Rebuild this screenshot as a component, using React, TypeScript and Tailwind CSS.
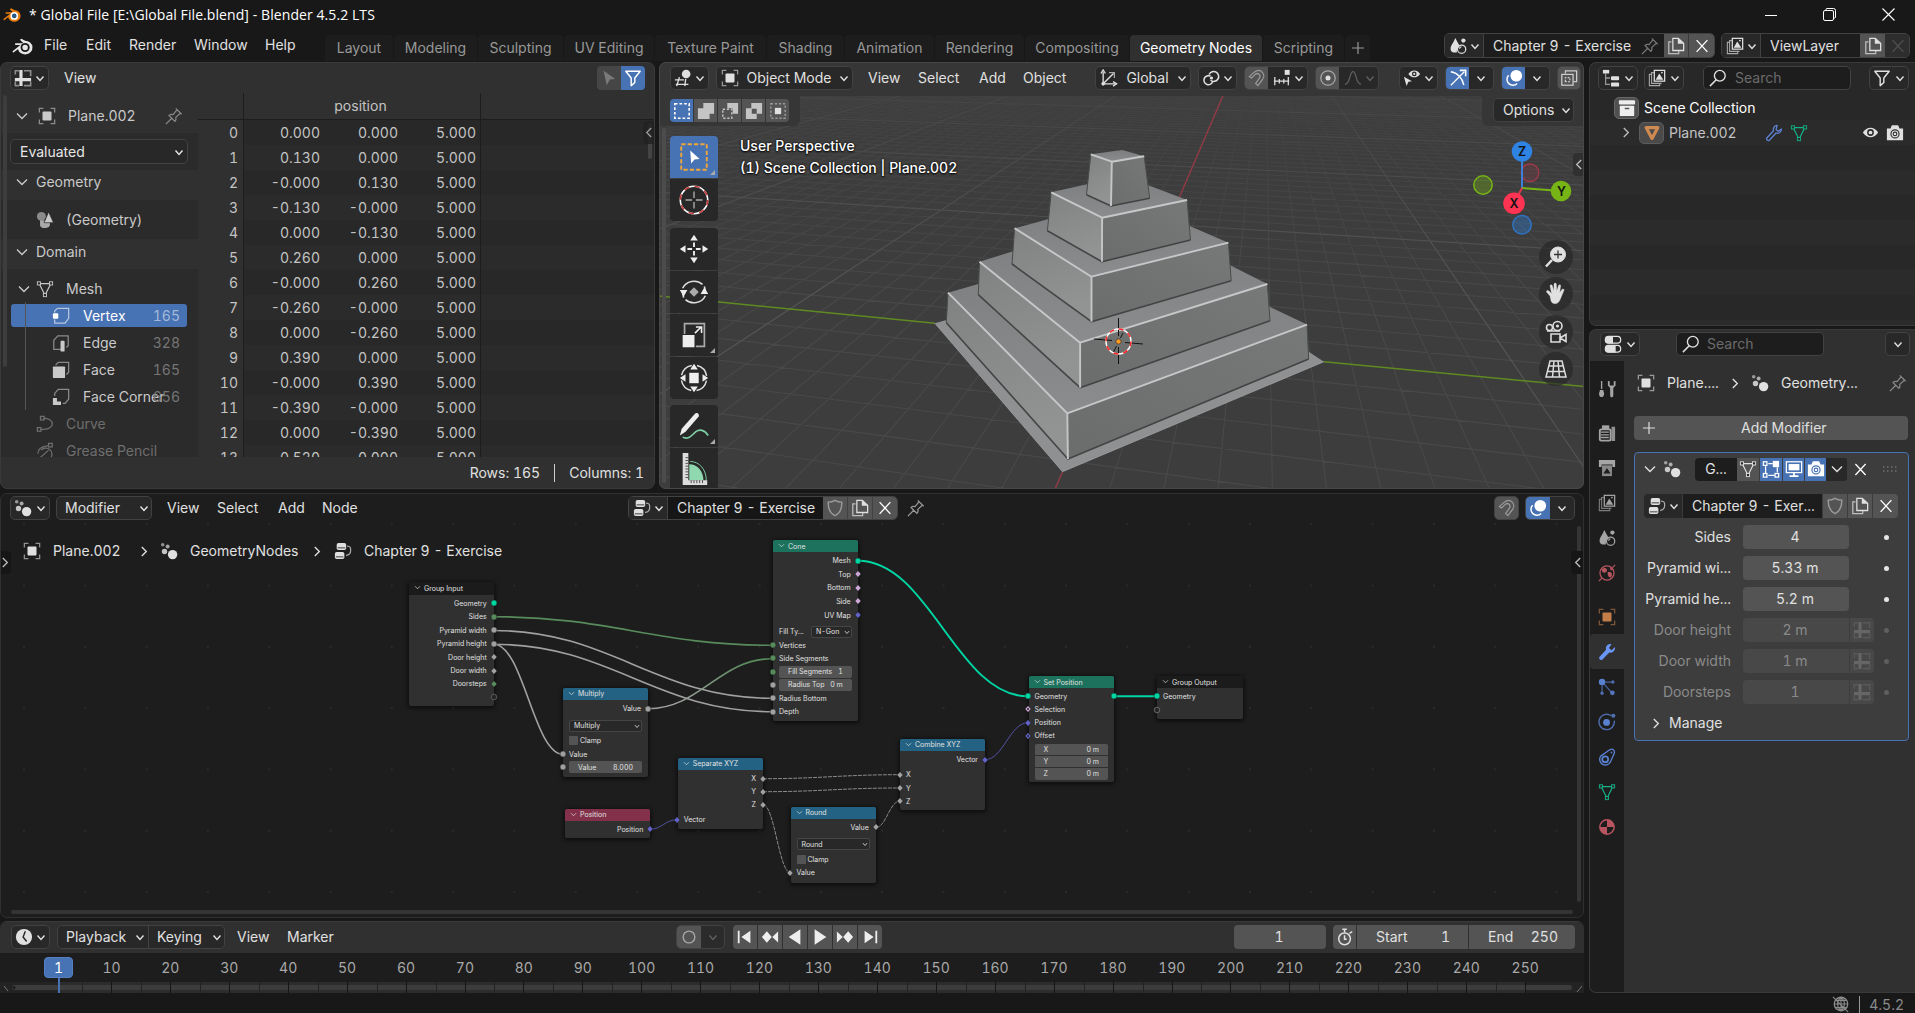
import React from "react";

type P = { children?: React.ReactNode; c?: string };

/* ---------- icon set, all drawn on a 20x20 box ---------- */
const S = { fill: "none", stroke: "currentColor", strokeWidth: 1.4 } as const;
const F = { fill: "currentColor" } as const;

const icons: Record<string, React.ReactNode> = {
  obj: (
    <>
      <path d="M1.5 6V1.5H6M14 1.5h4.5V6M18.5 14v4.5H14M6 18.5H1.5V14" {...S} opacity=".6" />
      <rect x="5" y="5" width="10" height="10" rx="1" {...F} />
    </>
  ),
  pin: <path d="M12 1.500l6.500 6.500M13.500 3l-4.500 5.500c-2-.6-3.500 0-4.500 1l6.500 6.500c1-1 1.600-2.500 1-4.500L17 7M7.500 12.500L1 19" {...S} strokeWidth="1.400" />,
  copy: (
    <>
      <path d="M5 5.500H2v13h11V15.500" {...S} opacity=".75" />
      <path d="M6.500 1.500h6l6 5.500v8h-12z" {...S} />
      <path d="M12 1v6.500h6.500z" {...F} />
    </>
  ),
  x: <path d="M4 3.500l12 13M16 3.500l-12 13" {...S} strokeWidth="1.500" />,
  shield: <path d="M10 1.500c2.500 1.500 4.800 2 7.500 2 .3 7-1.500 12-7.500 15-6-3-7.800-8-7.500-15 2.700 0 5-.5 7.500-2z" {...S} strokeWidth="1.600" />,
  tree: (
    <>
      <rect x="3" y="1" width="10.500" height="8" rx="2" {...F} />
      <rect x="1" y="11" width="10.500" height="8" rx="2" {...F} />
      <path d="M14.500 4.500c4 0 4 2 4 5s-1 5-5 5.500" {...S} opacity=".7" />
      <path d="M4 6.500h8.500M2 16.500h8.500" stroke="#303030" strokeWidth="1" />
    </>
  ),
  dots: (
    <>
      <circle cx="3" cy="3" r="2" {...F} opacity=".6" />
      <circle cx="8.500" cy="5" r="2.200" {...F} opacity=".7" />
      <circle cx="5" cy="10.500" r="3" {...F} opacity=".85" />
      <circle cx="14" cy="14" r="5.200" {...F} />
    </>
  ),
  magnet: (
    <>
      <path d="M1.500 8.500L7 3.500c7-5.500 14 3 8.500 9L11 18.500 8.500 16l4-5.500c2.500-4-1.500-7-4.500-4.500L4 10z" {...S} />
    </>
  ),
  overlay: (
    <>
      <circle cx="12.500" cy="7.500" r="6.500" {...F} />
      <path d="M4 7a6.200 6.200 0 1 0 9.500 9" {...S} strokeWidth="1.600" />
      <path d="M5.500 9.500c0 3 2 5 5 5" stroke="#4772b3" strokeWidth="1.500" fill="none" />
    </>
  ),
  gizmo: (
    <>
      <path d="M2 3c7 1 13 7 14.500 15" {...S} strokeWidth="1.600" />
      <path d="M2 18L17 3" {...S} />
      <path d="M12 1.500h6.500V8" {...S} strokeWidth="1.800" />
    </>
  ),
  sheet: (
    <>
      <path d="M1.500 6V2h4M11 2h7.500v6M1.500 14v4.500h4M11 18.500h7.500V14" {...S} strokeWidth="1.800" opacity=".55" />
      <path d="M6 1h3.500v9H19v3.500H9.500V19H6v-5.500H1V10h5z" {...F} />
    </>
  ),
  filter: <path d="M2 2.500h16l-6 7.500v5l-4 3.500V10z" {...S} strokeWidth="1.600" strokeLinejoin="round" />,
  arrow: <path d="M4 2l13 9-6 .800L7.500 18z" {...F} />,
  mesh: (
    <>
      <path d="M3.500 4h13L10 17zM3.500 4L10 17 16.500 4" {...S} strokeWidth="1.300" />
      <rect x="1.500" y="2" width="3.500" height="3.500" fill="#2b2b2b" stroke="currentColor" />
      <rect x="15" y="2" width="3.500" height="3.500" fill="#2b2b2b" stroke="currentColor" />
      <rect x="8.200" y="15" width="3.500" height="3.500" fill="#2b2b2b" stroke="currentColor" />
    </>
  ),
  geo: (
    <>
      <circle cx="6" cy="6" r="5" {...F} opacity=".6" />
      <path d="M4.500 10.500h11v4.500c0 5-10.500 5-11 1z" {...F} opacity=".8" />
      <path d="M14 1l5.500 12H9z" {...F} stroke="#2b2b2b" strokeWidth=".8" />
    </>
  ),
  vtx: (
    <>
      <path d="M6 1.500h12.500v11l-4 5.500H3v-4M3 6V4.500l3-3" {...S} opacity=".6" />
      <rect x="1" y="7" width="6" height="6" rx="1" {...F} />
    </>
  ),
  edge: (
    <>
      <path d="M10 17H2V7l4.500-5H18v11l-2 2" {...S} opacity=".6" />
      <rect x="9.500" y="7.500" width="4.500" height="12" rx="1" {...F} />
    </>
  ),
  face: (
    <>
      <path d="M4 4.500L7 1.500h11.500v11L16 15" {...S} opacity=".6" />
      <rect x="1" y="6" width="13.500" height="13" rx="1" {...F} />
    </>
  ),
  corner: (
    <>
      <path d="M3 9V6l4-4.500h11.500v11l-4 4.500H12" {...S} opacity=".6" />
      <path d="M1 11h4.500v4H10v4H1z" {...F} />
    </>
  ),
  curve: (
    <>
      <path d="M8 3.500c14 0 13 13 0 12.500H5" {...S} />
      <rect x="5" y="1.500" width="4" height="4" {...S} />
      <rect x="1.500" y="14" width="4" height="4" {...S} />
    </>
  ),
  gp: (
    <>
      <rect x="14" y="1.500" width="4" height="4" {...S} />
      <path d="M14 4c-9 1-12 5-12 9M4 18L14 9M6 9a6 6 0 0 1 10 9" {...S} />
    </>
  ),
  view3d: (
    <>
      <path d="M1 12h10M6 9L3 19M2 17h14M13 11l-1 8" {...S} strokeWidth="1.500" />
      <circle cx="13.500" cy="5.500" r="4.800" {...F} />
    </>
  ),
  orient: (
    <>
      <path d="M3.500 16.500V3M3.500 16.500H17M3.500 16.500L15 5" {...S} strokeWidth="1.500" />
      <path d="M1 5l2.500-4L6 5M14.500 14l4 2.500-4 2.500" {...S} />
      <path d="M10 4h6v6" {...S} opacity=".7" />
      <circle cx="3.500" cy="16.500" r="2" {...F} />
    </>
  ),
  pivot: (
    <>
      <path d="M9.500 8a5 5 0 1 0 2.500 5.500M9.500 12.500A5.500 5.500 0 1 0 8 6" {...S} strokeWidth="1.700" />
      <circle cx="10.500" cy="10" r="1.800" {...F} />
    </>
  ),
  snapinc: (
    <>
      <path d="M1 13.500h17M2 9v9M7 11v5M12 11v5M17 9v9" {...S} />
      <rect x="13" y="1" width="5.500" height="5.500" {...F} />
    </>
  ),
  prop: (
    <>
      <circle cx="10" cy="10" r="8" {...S} opacity=".6" />
      <circle cx="10" cy="10" r="2.800" {...F} />
    </>
  ),
  falloff: <path d="M1 17c6 0 5-14 9-14s3 14 9 14" {...S} />,
  vis: (
    <>
      <path d="M6 5.500c3.500-5 9.500-5 13 0-3.500 5-9.500 5-13 0z" {...F} />
      <circle cx="12.500" cy="5.500" r="2.600" fill="#282828" />
      <circle cx="12.500" cy="5.500" r="1.200" {...F} />
      <path d="M1 8.500l9 5-4 .8L4 19z" {...F} />
    </>
  ),
  xray: (
    <>
      <path d="M6 5V2h12.500v12H15" {...S} />
      <rect x="2" y="6" width="12.500" height="12" {...S} />
      <path d="M6 14V9.500h5V14z" {...S} strokeDasharray="2 1.500" />
    </>
  ),
  scene: (
    <>
      <path d="M7 1c3 6 5 8 4.500 10-3 1-3 4-2.500 6C3 18 1 15 2 11c1-3 3-5 5-10z" {...F} />
      <circle cx="14" cy="13.500" r="4.600" {...S} />
      <circle cx="16" cy="4" r="2.400" {...F} />
      <path d="M11.800 13a2 2 0 0 1 2-2" {...S} />
    </>
  ),
  layer: (
    <>
      <path d="M4 6H1.500v12.500H13V16M6.500 4H4v12h11" {...S} opacity=".7" strokeWidth="1.200" />
      <rect x="7" y="1.500" width="11.500" height="12" {...S} />
      <path d="M8.500 12l4-7 4.500 7z" {...F} />
      <circle cx="15.500" cy="4" r="1" {...F} />
    </>
  ),
  outl: (
    <>
      <rect x="1" y="1" width="7" height="4" {...F} />
      <path d="M4 5v12h5M4 10h5" {...S} opacity=".6" />
      <rect x="10" y="8" width="9" height="4.500" rx="1" {...F} />
      <rect x="10" y="15" width="9" height="4.500" rx="1" {...F} />
    </>
  ),
  search: (
    <>
      <circle cx="12" cy="7.500" r="6" {...S} strokeWidth="1.500" />
      <path d="M8 12l-7 7" {...S} strokeWidth="1.700" />
    </>
  ),
  coll: (
    <>
      <rect x="1" y="1.500" width="18" height="4.500" rx="1" {...F} />
      <rect x="2" y="7.500" width="16" height="11.500" rx="1" {...F} />
      <path d="M7.500 10.500h5" stroke="#555" strokeWidth="1.600" />
    </>
  ),
  tri: <path d="M3.500 4h13L10 16z" fill="none" stroke="currentColor" strokeWidth="3.600" strokeLinejoin="round" />,
  wrench: <path d="M13.500 1.500c-3 0-5 3-4 6L2 15.500c-1 1.500 1 3.800 2.800 2.500l7.500-8c3 1 6-1 6-4.500l-3.500 2.500-2.500-2z" {...S} strokeLinejoin="round" />,
  wrenchF: <path d="M13.500 1c-3.500 0-5.500 3.500-4.500 6.500L1.500 15.500c-1 2 1.200 4.300 3.200 3L12.500 10.500c3.500 1 6.800-1.500 6.500-6l-4 3.500-2.800-2.500L15 1.500z" {...F} />,
  eye: (
    <>
      <path d="M1 10c4.500-7.500 13.500-7.500 18 0-4.500 7.500-13.500 7.500-18 0z" {...F} />
      <circle cx="10" cy="10" r="4" fill="#2b2b2b" />
      <circle cx="10" cy="10" r="2.200" {...F} />
    </>
  ),
  cam: (
    <>
      <path d="M1 5h4l1.500-3.500h7L15 5h4v13H1z" {...F} />
      <circle cx="10" cy="11" r="4.500" fill="none" stroke="#333" strokeWidth="1.300" />
      <circle cx="10" cy="11" r="2" fill="none" stroke="#333" strokeWidth="1.300" />
    </>
  ),
  camB: (
    <>
      <path d="M1 5h4l1.500-3.500h7L15 5h4v13H1z" {...F} />
      <circle cx="10" cy="11" r="4.500" fill="none" stroke="#4772b3" strokeWidth="1.300" />
      <circle cx="10" cy="11" r="2" fill="none" stroke="#4772b3" strokeWidth="1.300" />
    </>
  ),
  props: (
    <>
      <rect x="1.500" y="1.500" width="17" height="7.500" rx="3.500" {...S} />
      <path d="M5 1h5v8.500H5C0 9.500 0 1 5 1z" {...F} />
      <rect x="1.500" y="11.500" width="17" height="7.500" rx="3.500" {...S} />
      <path d="M5 11h8v8.500H5c-5 0-5-8.500 0-8.500z" {...F} />
    </>
  ),
  tool: (
    <>
      <path d="M4 1v9" {...S} strokeWidth="1.500" />
      <path d="M2 11h4v1.500c1.500 2 1 6.500-2 6.500s-3.500-4.500-2-6.500z" {...F} />
      <path d="M11 1v5l2.500 3v8c0 3 3.500 3 3.500 0V9l2.500-3V1l-2 .5v4.500h-4.500V1.500z" {...F} />
    </>
  ),
  render: (
    <>
      <rect x="2" y="6" width="12" height="12.500" rx="1.500" {...S} strokeWidth="2" />
      <path d="M3 9h9M3 12h9M3 15h9" {...S} />
      <rect x="4.500" y="1.500" width="8" height="4" {...F} />
      <path d="M15 3h4v16h-4z" {...F} opacity=".85" />
    </>
  ),
  output: (
    <>
      <path d="M1 1h18v8h-3V6H4v3H1z" {...F} />
      <rect x="4.500" y="7" width="11" height="12" {...F} opacity=".8" />
      <path d="M6 16l4-6 4 6z" fill="#1d1d1d" />
    </>
  ),
  world: (
    <>
      <circle cx="10" cy="10" r="7.800" {...S} />
      <path d="M4 6c4-3 6-1 6 1S7 11 5 9zM11 9c4-1 6 2 3 6-2 1-4-4-3-6zM13 3l4 4-3 0z" {...F} />
      <path d="M1 19l3-3M16 4l3-3" {...S} />
    </>
  ),
  part: (
    <>
      <circle cx="4.500" cy="4.500" r="3.600" {...F} />
      <path d="M4.500 8v8M8 4.500h7M7 7l8 9" {...S} opacity=".7" />
      <circle cx="4.500" cy="17" r="1.900" {...F} opacity=".8" />
      <circle cx="16.500" cy="4.500" r="1.900" {...F} opacity=".8" />
      <circle cx="16" cy="16.500" r="2.600" {...F} opacity=".9" />
    </>
  ),
  phys: (
    <>
      <path d="M14.500 3A8.500 8.500 0 1 0 18 8.500" {...S} strokeWidth="1.600" opacity=".8" />
      <circle cx="9.500" cy="10.500" r="3.800" {...F} />
      <circle cx="17" cy="3" r="2.300" {...F} opacity=".85" />
    </>
  ),
  constr: (
    <>
      <path d="M3 9L13 2c4-2 6 1 5 4l-4 9a6.300 6.300 0 1 1-11-6z" {...S} strokeWidth="1.500" />
      <circle cx="8" cy="12.500" r="3.300" {...S} strokeWidth="2" />
      <circle cx="15" cy="5" r="1" {...F} />
    </>
  ),
  mat: (
    <>
      <circle cx="10" cy="10" r="8" {...S} strokeWidth="1.600" />
      <path d="M10 2v8h8c0-4-3-8-8-8zM10 10v8c-4 0-8-3-8-8z" {...F} />
    </>
  ),
  edit: (
    <>
      <path d="M4 7v8M7 17h7M17 8v6M7 4h5" {...S} />
      <rect x="1.500" y="2" width="4" height="4" {...S} />
      <rect x="1.500" y="15" width="4" height="4" {...S} />
      <rect x="14.500" y="15" width="4" height="4" {...S} />
      <rect x="12" y="1" width="7" height="7" {...F} />
    </>
  ),
  disp: (
    <>
      <rect x="1.500" y="2" width="17" height="12" {...S} />
      <rect x="4" y="4.500" width="12" height="7" {...F} />
      <path d="M5 18h10M10 14v4" {...S} strokeWidth="2" />
    </>
  ),
  clock: (
    <>
      <circle cx="10" cy="10" r="9" {...F} />
      <path d="M11.500 3.500L9 10l4 5" fill="none" stroke="#282828" strokeWidth="1.600" />
    </>
  ),
  stop: (
    <>
      <circle cx="9.500" cy="12" r="6.500" {...S} strokeWidth="1.700" />
      <path d="M7 1.500h5M9.500 2v3M9.500 8v4.500H12M15 6l3-2" {...S} strokeWidth="1.700" />
    </>
  ),
  first: <path d="M2 3h2v14H2zM16 3v14L6 10z" {...F} />,
  last: <path d="M16 3h2v14h-2zM4 3v14l10-7z" {...F} />,
  prevk: <path d="M6.500 3.500L12 10l-5.500 6.500L1 10zM19 4v12l-6.500-6z" {...F} />,
  nextk: <path d="M13.500 3.500L19 10l-5.500 6.500L8 10zM1 4v12l6.500-6z" {...F} />,
  rev: <path d="M16 1.500v17L3 10z" {...F} />,
  play: <path d="M4 1.500v17L17 10z" {...F} />,
  rec: <circle cx="10" cy="10" r="6.500" {...S} strokeWidth="1.600" />,
  blender: (
    <>
      <path d="M12.500 4.500a7 6.500 0 1 1-6.800 8L1 16l-.5-1.500L8 8.500H3V7h8L7.500 3.500l1.500-1z" {...F} />
      <circle cx="12.500" cy="11" r="4.300" fill="var(--hole)" />
      <circle cx="12.500" cy="11" r="2.600" fill="var(--iris)" />
    </>
  ),
  globe: (
    <>
      <circle cx="10" cy="10" r="7.500" {...S} />
      <path d="M10 2.500v15M2.500 10h15M4 6h12M4 14h12M10 2.500c-5 4-5 11 0 15M10 2.500c5 4 5 11 0 15M1 2l17 17" {...S} strokeWidth="1.200" />
    </>
  ),
};

const Ic = ({ n, c = "" }: { n: string; c?: string }) => (
  <svg viewBox="0 0 20 20" className={`h-[18px] w-[18px] shrink-0 ${c}`}>{icons[n]}</svg>
);
const Chev = ({ c = "" }: { c?: string }) => (
  <svg viewBox="0 0 10 10" className={`h-[10px] w-[10px] shrink-0 ${c}`}>
    <path d="M1.500 3.500L5 7.500l3.500-4" fill="none" stroke="currentColor" strokeWidth="1.400" />
  </svg>
);
const Right = ({ c = "" }: { c?: string }) => (
  <svg viewBox="0 0 10 14" className={`h-[13px] w-[9px] shrink-0 ${c}`}>
    <path d="M2 2l5 5-5 5" fill="none" stroke="currentColor" strokeWidth="1.500" />
  </svg>
);
const Down = ({ c = "" }: { c?: string }) => (
  <svg viewBox="0 0 14 10" className={`h-[10px] w-[14px] shrink-0 ${c}`}>
    <path d="M2 2.500l5 5 5-5" fill="none" stroke="currentColor" strokeWidth="1.400" />
  </svg>
);

const Box = ({ children, c = "" }: P) => (
  <div className={`flex h-6 shrink-0 items-center overflow-hidden rounded-[5px] border border-[#424242] bg-[#282828] ${c}`}>{children}</div>
);
const Cell = ({ children, c = "" }: P) => <div className={`flex h-full shrink-0 items-center justify-center ${c}`}>{children}</div>;
const EditorBtn = ({ n, c = "" }: { n: string; c?: string }) => (
  <Box c={`justify-between pl-[3px] pr-[3px] ${c}`}>
    <Ic n={n} />
    <Chev />
  </Box>
);
const T = ({ children, c = "" }: P) => <div className={`shrink-0 whitespace-nowrap ${c}`}>{children}</div>;

/* ---------- top bars ---------- */
const TitleBar = () => (
  <div className="flex h-[31px] items-center pr-[20px] pb-[2px] pl-[3px] text-white">
    <Ic n="blender" c="text-[#e87d0d] [--hole:#fff] [--iris:#265787]" />
    <T c="ml-[8px] font-['Open_Sans',sans-serif] text-[14px] tracking-[0.08px]">* Global File [E:\Global File.blend] - Blender 4.5.2 LTS</T>
    <div className="ml-auto flex items-center gap-[46px]">
      <svg className="h-[12px] w-[12px]" viewBox="0 0 12 12"><path d="M0 6.500h12" stroke="#fff" /></svg>
      <svg className="h-[13px] w-[13px]" viewBox="0 0 13 13"><path d="M3 2.500V1.500Q3 .5 4 .5h6.500q2 0 2 2V9q0 1-1 1H11M.5 4q0-1.500 1.500-1.500h7q1.500 0 1.500 1.500v7q0 1.500-1.500 1.500H2Q.5 12.500.5 11z" fill="none" stroke="#fff" /></svg>
      <svg className="h-[13px] w-[13px]" viewBox="0 0 13 13"><path d="M.5.5l12 12M12.500.5l-12 12" stroke="#fff" strokeWidth="1.100" /></svg>
    </div>
  </div>
);

const tabs: [string, string][] = [
  ["Layout", "w-[69px]"], ["Modeling", "w-[84px]"], ["Sculpting", "w-[86px]"], ["UV Editing", "w-[91px]"],
  ["Texture Paint", "w-[112px]"], ["Shading", "w-[78px]"], ["Animation", "w-[90px]"], ["Rendering", "w-[90px]"],
  ["Compositing", "w-[105px]"], ["Geometry Nodes", "w-[133px]"], ["Scripting", "w-[82px]"],
];
const MenuBar = () => (
  <div className="flex h-[31px]">
    <div className="flex h-[28px] w-[325px] shrink-0 items-center pl-[12px]">
      <Ic n="blender" c="!h-[21px] !w-[21px] translate-y-px text-[#e6e6e6] [--hole:#181818] [--iris:#e6e6e6]" />
      <T c="ml-[11px] w-[42px]">File</T>
      <T c="w-[43px]">Edit</T>
      <T c="w-[65px]">Render</T>
      <T c="w-[71px]">Window</T>
      <T>Help</T>
    </div>
    <div className="flex items-start pt-[4px] text-[#989898]">
      {tabs.map(([t, w]) => (
        <div key={t} className={`${w} h-[26px] shrink-0 pr-px`}>
          <div className={`flex h-full items-center justify-center rounded-t-[4px] whitespace-nowrap ${t === "Geometry Nodes" ? "bg-[#303030] text-white" : "bg-[#1d1d1d]"}`}>{t}</div>
        </div>
      ))}
      <div className="flex h-[26px] w-[25px] items-center justify-center rounded-t-[4px] bg-[#1d1d1d]">
        <svg viewBox="0 0 12 12" className="h-[12px] w-[12px]"><path d="M6 0v12M0 6h12" stroke="#989898" strokeWidth="1.200" /></svg>
      </div>
    </div>
    <div className="mr-[5px] ml-auto flex gap-[6px] pt-[2px]">
      <Box c="!h-[25px] w-[271px] !bg-[#1d1d1d]">
        <Cell c="w-[39px] gap-[3px] border-r border-[#424242] bg-[#282828]"><Ic n="scene" /><Chev /></Cell>
        <Cell c="w-[180px] !justify-between pr-[5px] pl-[9px]"><T>Chapter 9 - Exercise</T><Ic n="pin" c="text-[#777]" /></Cell>
        <Cell c="w-[25px] border-r border-[#3a3a3a] bg-[#545454]"><Ic n="copy" /></Cell>
        <Cell c="w-[26px] bg-[#545454]"><Ic n="x" c="text-white" /></Cell>
      </Box>
      <Box c="!h-[25px] w-[189px] !bg-[#1d1d1d]">
        <Cell c="w-[39px] gap-[3px] border-r border-[#424242] bg-[#282828]"><Ic n="layer" /><Chev /></Cell>
        <Cell c="w-[99px] !justify-start pl-[9px]"><T>ViewLayer</T></Cell>
        <Cell c="w-[25px] bg-[#545454]"><Ic n="copy" /></Cell>
        <Cell c="w-[25px] bg-[#2e2e2e]"><Ic n="x" c="text-[#505050]" /></Cell>
      </Box>
    </div>
  </div>
);

/* ---------- spreadsheet ---------- */
const rows: string[][] = [
  ["0", "0.000", "0.000", "5.000"], ["1", "0.130", "0.000", "5.000"], ["2", "-0.000", "0.130", "5.000"],
  ["3", "-0.130", "-0.000", "5.000"], ["4", "0.000", "-0.130", "5.000"], ["5", "0.260", "0.000", "5.000"],
  ["6", "-0.000", "0.260", "5.000"], ["7", "-0.260", "-0.000", "5.000"], ["8", "0.000", "-0.260", "5.000"],
  ["9", "0.390", "0.000", "5.000"], ["10", "-0.000", "0.390", "5.000"], ["11", "-0.390", "-0.000", "5.000"],
  ["12", "0.000", "-0.390", "5.000"], ["13", "0.520", "0.000", "5.000"],
];
const domains: [string, string, string][] = [["vtx", "Vertex", "165"], ["edge", "Edge", "328"], ["face", "Face", "165"], ["corner", "Face Corner", "656"]];

const Spreadsheet = () => (
  <div className="relative flex w-[655px] shrink-0 flex-col overflow-hidden rounded-[7px] border border-[#3a3a3a] bg-[#303030]">
    <div className="flex h-[30px] shrink-0 items-center pr-[9px] pl-[9px]">
      <EditorBtn n="sheet" c="w-[39px]" />
      <T c="ml-[15px]">View</T>
      <div className="ml-auto flex h-6 overflow-hidden rounded-[4px]">
        <Cell c="w-[24px] bg-[#464646]"><Ic n="arrow" c="text-[#7a7a7a]" /></Cell>
        <Cell c="w-[24px] bg-[#4772b3]"><Ic n="filter" c="text-white" /></Cell>
      </div>
    </div>
    <div className="flex min-h-0 flex-1 overflow-hidden">
      <div className="relative flex w-[197px] shrink-0 flex-col overflow-hidden bg-[#2b2b2b] text-[#c9c9c9]">
        <div className="flex h-[40px] shrink-0 items-center bg-[#303030] pt-[5px] pl-[14px]">
          <Down /><Ic n="obj" c="ml-[9px]" /><T c="ml-[12px] w-[97px]">Plane.002</T><Ic n="pin" c="text-[#888]" />
        </div>
        <div className="flex h-[37px] shrink-0 items-center pl-[9px]">
          <Box c="h-[25px] w-[178px] justify-between pr-[3px] pl-[9px] text-[#e6e6e6]"><T>Evaluated</T><Chev /></Box>
        </div>
        <div className="flex h-[30px] shrink-0 items-center bg-[#303030] pb-[6px] pl-[14px]"><Down /><T c="ml-[7px]">Geometry</T></div>
        <div className="flex h-[39px] shrink-0 items-center pl-[35px]"><Ic n="geo" /><T c="ml-[12px]">(Geometry)</T></div>
        <div className="flex h-[30px] shrink-0 items-center bg-[#303030] pb-[4px] pl-[14px]"><Down /><T c="ml-[7px]">Domain</T></div>
        <div className="flex flex-1 flex-col pt-[9px]">
          <div className="flex h-[23px] shrink-0 items-center pb-px pl-[16px]"><Down /><Ic n="mesh" c="ml-[5px]" /><T c="ml-[12px]">Mesh</T></div>
          <div className="relative mt-[3px] flex shrink-0 flex-col gap-[4px] pr-[11px] pl-[10px]">
            {domains.map(([i, t, n], k) => (
              <div key={t} className={`flex h-[23px] items-center justify-between rounded-[3px] pr-[7px] pl-[41px] ${k === 0 ? "bg-[#4772b3] text-white" : ""}`}>
                <div className="flex w-[100px] shrink-0 items-center gap-[13px]"><Ic n={i} /><T>{t}</T></div>
                <div className={k === 0 ? "-ml-8 text-[#a3b8d9]" : "-ml-8 text-[#757575]"}>{n}</div>
              </div>
            ))}
            <div className="absolute -top-[2px] left-[24px] h-[108px] w-px bg-[#555]" />
          </div>
          <div className="mt-[5px] flex h-[23px] shrink-0 items-center pb-px pl-[35px] text-[#6e6e6e]"><Ic n="curve" /><T c="ml-[12px]">Curve</T></div>
          <div className="mt-[4px] flex h-[23px] shrink-0 items-center pb-px pl-[35px] text-[#6e6e6e]"><Ic n="gp" /><T c="ml-[12px]">Grease Pencil</T></div>
        </div>
        <div className="absolute top-[2px] left-[2px] h-[272px] w-[4px] rounded-full bg-[#3d3d3d]" />
      </div>
      <div className="flex min-w-0 flex-1 flex-col overflow-hidden text-[#c4c4c4]">
        <div className="flex h-[27px] shrink-0 items-center border-b border-[#1d1d1d]">
          <div className="h-full w-[46px] border-r border-[#1d1d1d]" />
          <div className="flex h-full w-[237px] items-center justify-center border-r border-[#1d1d1d] pr-[3px]">position</div>
        </div>
        {rows.map((r, k) => (
          <div key={k} className={`flex h-[25px] shrink-0 items-center text-right ${k % 2 ? "bg-[#2b2b2b]" : "bg-[#282828]"}`}>
            <div className="flex h-full w-[46px] items-center justify-end border-r border-[#1d1d1d] bg-[#303030] pr-[5px]">{r[0]}</div>
            <div className="flex h-full w-[237px] items-center border-r border-[#1d1d1d]">
              <div className="w-[76px]">{r[1]}</div>
              <div className="w-[78px]">{r[2]}</div>
              <div className="w-[78px]">{r[3]}</div>
            </div>
          </div>
        ))}
      </div>
    </div>
    <div className="flex h-[31px] shrink-0 items-center justify-end pr-[10px]">
      <T>Rows: 165</T><div className="mx-[14px] h-[18px] w-px bg-[#ccc]" /><T>Columns: 1</T>
    </div>
    <div className="absolute top-[60px] right-[2px] h-[36px] w-[4px] rounded-full bg-[#444]" />
    <div className="absolute top-[58px] right-0 flex h-[23px] w-[11px] items-center justify-center rounded-l bg-[#202020]/80"><Right c="rotate-180 text-[#999]" /></div>
  </div>
);

/* ---------- 3D viewport ---------- */
// Floor-plane projection: w = 1 + D*s + C*t, with s along X and t along Y.
const D = -0.05165;
const C = -0.0107;
const proj = (s: number, t: number): [number, number] => {
  const w = 1 + D * s + C * t;
  return [(1118.4 - 65.34 * s + 24.39 * t) / w, (341.3 + 0.103 * s - 0.064 * t) / w];
};
const seg = (a: [number, number], b: [number, number]) => `M${a[0].toFixed(1)} ${a[1].toFixed(1)}L${b[0].toFixed(1)} ${b[1].toFixed(1)}`;
let minor = "";
let major = "";
for (let k = -70; k <= 60; k++) {
  const sMax = (0.4 - 1 - C * k) / D;
  const alongX = seg(proj(-90, k), proj(sMax, k));
  const tMax = (0.4 - 1 - D * k) / C;
  const alongY = k < 16 ? seg(proj(k, -90), proj(k, Math.min(tMax, 120))) : "";
  if (k === 0) continue;
  if (k % 10 === 0) major += alongX + alongY;
  else {
    minor += alongX;
    if (k > -50) minor += alongY;
  }
}

type Tier = { l: number[]; f: number[]; r: number[]; bl: number[]; bf: number[]; br: number[]; back: number[] };
const tiers: Tier[] = [
  { l: [948, 292.7], f: [1067.3, 413.3], r: [1307, 324.6], bl: [946.3, 322.7], bf: [1067.9, 459], br: [1308.7, 359], back: [1130, 240] },
  { l: [979.5, 261.7], f: [1080.1, 342.7], r: [1267.4, 284], bl: [978.3, 294.7], bf: [1080.1, 387.7], br: [1270, 320.7], back: [1130, 215] },
  { l: [1014.6, 228.3], f: [1091.5, 276.7], r: [1228.4, 242.7], bl: [1012, 264], bf: [1091.5, 321.7], br: [1231.2, 280.7], back: [1125, 198] },
  { l: [1051.2, 192.3], f: [1102.1, 217.7], r: [1187.1, 200], bl: [1047.4, 230.7], bf: [1102, 261.7], br: [1190.5, 240], back: [1124, 176] },
  { l: [1090.8, 154.3], f: [1111.8, 161.7], r: [1144.2, 156.3], bl: [1086.5, 194.7], bf: [1111, 206], br: [1149.7, 198.3], back: [1122.3, 150] },
];
const pts = (...p: number[][]) => p.map((q) => q.join(",")).join(" ");

const Scene3D = () => (
  <svg viewBox="659 62 925 427" className="absolute inset-0 h-full w-full">
    <defs>
      <linearGradient id="fade" x1="0" y1="62" x2="0" y2="300" gradientUnits="userSpaceOnUse">
        <stop offset="0" stopColor="#fff" stopOpacity=".25" /><stop offset="1" stopColor="#fff" />
      </linearGradient>
      <mask id="m" maskUnits="userSpaceOnUse" x="659" y="62" width="925" height="427"><rect x="659" y="62" width="925" height="427" fill="url(#fade)" /></mask>
      <linearGradient id="lf" x1="0" y1="0" x2=".3" y2="1"><stop offset="0" stopColor="#808282" /><stop offset="1" stopColor="#929494" /></linearGradient>
      <linearGradient id="rf" x1="1" y1="0" x2="0" y2="1"><stop offset="0" stopColor="#777979" /><stop offset="1" stopColor="#6b6d6d" /></linearGradient>
      <linearGradient id="tf" x1="0" y1="0" x2="0" y2="1"><stop offset="0" stopColor="#7c7d7f" /><stop offset="1" stopColor="#8b8c8e" /></linearGradient>
    </defs>
    <rect x="659" y="62" width="925" height="427" fill="#3d3d3d" />
    <g mask="url(#m)" fill="none">
      <path d={minor} stroke="#494949" strokeWidth="1.100" />
      <path d={major} stroke="#555" strokeWidth="1.200" />
    </g>
    <path d="M659 296L935 323.300M1324 361.700L1585 386.700" stroke="#5f8a21" strokeWidth="1.500" />
    <path d="M1237.500 62L1179 198M1062.500 472L1055 489" stroke="#8e3b45" strokeWidth="1.500" />
    <polygon points={pts([934.9, 323.3], [1062.5, 471.7], [1323.9, 361.7], [1300, 346], [1130, 280], [950, 319])} fill="#8f9092" />
    <path d="M934.900 323.300L1062.500 471.700L1323.900 361.700" fill="none" stroke="#a0a1a2" strokeWidth=".8" />
    {tiers.map((t, i) => (
      <g key={i} strokeLinejoin="round">
        <polygon points={pts(t.l, t.f, t.bf, t.bl)} fill="url(#lf)" />
        <polygon points={pts(t.f, t.r, t.br, t.bf)} fill="url(#rf)" />
        <polygon points={pts(t.l, t.f, t.r, t.back)} fill="url(#tf)" />
        <polyline points={pts(t.l, t.bl)} fill="none" stroke="#4a4b4b" strokeWidth="1" />
        <polyline points={pts(t.r, t.br)} fill="none" stroke="#4a4b4b" strokeWidth="1" />
        <polyline points={pts(t.bl, t.bf, t.br)} fill="none" stroke="#3c3d3d" strokeWidth="1.600" strokeOpacity=".9" />
        <polyline points={pts(t.l, t.f, t.r)} fill="none" stroke="#c6c7c8" strokeWidth="1.900" />
        <path d={`M${t.f.join(" ")}L${t.bf.join(" ")}`} stroke="#c4c5c6" strokeWidth="1.900" />
      </g>
    ))}
    <g fill="none" strokeWidth="1">
      <path d="M1118.500 318v18M1118.500 347v17M1094 339l18 1.500M1125 342.500l18 1.500M1123 333l-2.500 5M1116.500 346l-3 6" stroke="#111" />
      <circle cx="1118.500" cy="341.500" r="12.500" stroke="#fff" strokeWidth="1.500" />
      <circle cx="1118.500" cy="341.500" r="12.500" stroke="#f22" strokeWidth="1.500" strokeDasharray="4.900 4.900" />
      <circle cx="1118.500" cy="341.500" r="2.600" fill="#ff9a1f" stroke="#333" strokeWidth=".7" />
    </g>
    {/* navigation gizmo */}
    <g strokeWidth="1.500">
      <circle cx="1530" cy="172.700" r="8.800" fill="#f33a52" fillOpacity=".12" stroke="#9c3a49" />
      <path d="M1522 188V152" stroke="#3d7fd6" strokeWidth="2" />
      <circle cx="1483" cy="185" r="9.200" fill="#76b515" fillOpacity=".35" stroke="#76b515" />
      <circle cx="1522" cy="224.700" r="9.200" fill="#2f83e3" fillOpacity=".35" stroke="#2f73c3" />
      <path d="M1522 188L1561 191" stroke="#76b515" strokeWidth="2" />
      <path d="M1522 188L1514 203" stroke="#e03a50" strokeWidth="2" />
      <circle cx="1522" cy="151.500" r="10.300" fill="#2f83e3" />
      <circle cx="1561" cy="191" r="10.300" fill="#76b515" />
      <circle cx="1514" cy="203.300" r="10.800" fill="#ff3352" />
      <g fontFamily="Inter, sans-serif" fontSize="12.500" fontWeight="600" textAnchor="middle" fill="#111">
        <text x="1522" y="156">Z</text><text x="1561.500" y="195.500">Y</text><text x="1514" y="207.700">X</text>
      </g>
    </g>
    {/* navigation buttons */}
    {[257, 294, 332, 369].map((y) => <circle key={y} cx="1556" cy={y} r="17" fill="#262626" fillOpacity=".65" />)}
    <g fill="#e0e0e0" stroke="#e0e0e0">
      <circle cx="1558" cy="254.500" r="7.500" /><path d="M1552 260l-6 6.500" strokeWidth="2.500" /><path d="M1558 250.500v8M1554 254.500h8" stroke="#333" strokeWidth="1.300" />
      <path d="M1550 296l-3.500-4c-.5-1.800 1.500-2 2.500-1l2.500 2.500-1.500-7.500c0-1.600 2-1.700 2.400-.2l1.400 5 .2-6.500c.2-1.600 2.200-1.600 2.400 0l.4 6.500 1.700-5.300c.6-1.400 2.300-1 2.200.5l-1 6.500 2.200-3c1-1.200 2.600-.4 2 1l-3.700 9c-2 5.500-8 5-9.200 1.500z" strokeWidth=".3" />
    </g>
    <g fill="none" stroke="#dcdcdc" strokeWidth="1.600">
      <circle cx="1549.500" cy="327.500" r="3" /><circle cx="1557.500" cy="326" r="4.500" /><circle cx="1557.500" cy="326" r=".8" /><path d="M1547 331h13M1551 334h9v8h-9zM1560 338l6-3.500v7z" />
      <path d="M1550 361h12l4 16h-20zM1554 361l-1.500 16M1558 361l1.500 16M1549 366h14M1547.500 371.500h17" strokeWidth="1.500" />
    </g>
  </svg>
);

const toolIcons: Record<string, React.ReactNode> = {
  select: (
    <>
      <rect x="4.500" y="4.500" width="27" height="27" fill="none" stroke="#f0a73a" strokeWidth="2" strokeDasharray="4.500 2.250" />
      <path d="M14 11l10 9-5.500.7-3.500 4.300z" fill="#fff" />
    </>
  ),
  cursor: (
    <>
      <circle cx="18" cy="18" r="14.500" fill="none" stroke="#fff" strokeWidth="1.700" />
      <circle cx="18" cy="18" r="14.500" fill="none" stroke="#c33c3c" strokeWidth="1.700" strokeDasharray="5.700 5.700" />
      <path d="M18 9v7M18 20v7M9 18h7M20 18h7" stroke="#aaa" strokeWidth="1.500" />
    </>
  ),
  move: <path d="M18 3l4 6h-8zM18 33l4-6h-8zM3 18l6-4v8zM33 18l-6-4v8zM17 11h2v5h-2zM17 20h2v5h-2zM11 17h5v2h-5zM20 17h5v2h-5z" fill="#eee" />,
  rotate: (
    <>
      <path d="M6 14a13 12 0 0 1 21-4M30 22a13 12 0 0 1-21 4M29 12l1 5M7 24l-1-5" fill="none" stroke="#ddd" strokeWidth="1.700" />
      <path d="M3 16h8l-4 7zM33 20h-8l4-7z" fill="#eee" /><path d="M18 13l5 5-5 5-5-5z" fill="#aaa" />
    </>
  ),
  scale: (
    <>
      <path d="M8 17V6h21v24H20" fill="none" stroke="#aaa" strokeWidth="1.800" /><rect x="6" y="18" width="12.500" height="13" fill="#eee" />
      <path d="M19 16l6-6M20 9.500h6V16" fill="none" stroke="#eee" strokeWidth="1.700" />
    </>
  ),
  transform: (
    <>
      <circle cx="18" cy="18" r="13.500" fill="none" stroke="#ddd" strokeWidth="1.600" strokeDasharray="15.500 5.700" strokeDashoffset="-2.850" />
      <rect x="13" y="12.500" width="10" height="11" fill="#eee" /><path d="M18 3l4 6h-8zM18 33l4-6h-8zM3 18l6-4v8zM33 18l-6-4v8z" fill="#eee" />
    </>
  ),
  annotate: (
    <>
      <path d="M6 30c7 3 10-3 14-6s9-2 13 4" fill="none" stroke="#7ed0a4" strokeWidth="1.800" /><path d="M3 28l2-7L19 5c2-2 5 0 4 3L9 24z" fill="#eee" />
    </>
  ),
  measure: (
    <>
      <path d="M13 30V13c9 0 15 8 15 17z" fill="#8fd8b0" /><path d="M14 10c10 0 17 9 17 20" fill="none" stroke="#7ed0a4" /><path d="M6 1h6v29h20v5H6z" fill="#ddd" />
      <path d="M9 6h3M9 9h3M9 12h3M9 15h3M9 18h3M9 21h3M9 24h3M9 27h3M15 30v3M18 30v3M21 30v3M24 30v3M27 30v3" stroke="#444" />
    </>
  ),
};
const ToolBtn = ({ n, c = "", tri = false }: { n: string; c?: string; tri?: boolean }) => (
  <div className={`relative flex h-[42px] w-[48px] shrink-0 items-center justify-center bg-[#282828] ${c}`}>
    <svg viewBox="0 0 36 36" className="h-[34px] w-[34px]">{toolIcons[n]}</svg>
    {tri && <svg viewBox="0 0 5 5" className="absolute right-[3px] bottom-[3px] h-[5px] w-[5px]"><path d="M5 0v5H0z" fill="#aaa" /></svg>}
  </div>
);

const selModes = [
  <rect key="a" x="2" y="2" width="16" height="16" fill="none" stroke="#fff" strokeWidth="1.800" strokeDasharray="3 2.200" />,
  <path key="b" d="M7 1h12v12h-5v6H1V7h6z" fill="#c4c4c4" />,
  <g key="c"><path d="M7 1h12v12h-6V7H7z" fill="#c4c4c4" /><rect x="2" y="8" width="10" height="10" fill="none" stroke="#c4c4c4" strokeWidth="1.600" strokeDasharray="2.500 2" /></g>,
  <path key="d" fillRule="evenodd" d="M7 1h12v12h-6v6H1V7h6zM7.500 7.500v5.500h5.500V7.500z" fill="#c4c4c4" />,
  <g key="e"><rect x="2" y="2" width="16" height="16" fill="none" stroke="#999" strokeWidth="1.600" strokeDasharray="2.500 2" /><rect x="6.500" y="6.500" width="7" height="7" fill="#e0e0e0" /></g>,
];

const Viewport = () => (
  <div className="relative flex w-[925px] shrink-0 flex-col overflow-hidden rounded-[7px] bg-[#3d3d3d]">
    <Scene3D />
    <div className="relative flex h-[34px] shrink-0 items-center bg-[#363636]/95 pb-[2px] pl-[11px]">
      <EditorBtn n="view3d" c="w-[39px]" />
      <Box c="ml-[7px] w-[137px] justify-between pr-[3px] pl-[4px]"><Ic n="obj" /><T>Object Mode</T><Chev /></Box>
      <T c="ml-[15px] w-[50px]">View</T><T c="w-[61px]">Select</T><T c="w-[44px]">Add</T><T c="w-[72px]">Object</T>
      <Box c="w-[96px] justify-between pr-[3px] pl-[4px]"><Ic n="orient" /><T>Global</T><Chev /></Box>
      <EditorBtn n="pivot" c="ml-[7px] w-[39px]" />
      <Box c="ml-[7px] w-[64px]">
        <Cell c="w-[23px] bg-[#545454]"><Ic n="magnet" c="text-[#999]" /></Cell>
        <Cell c="w-[40px] gap-[3px]"><Ic n="snapinc" /><Chev /></Cell>
      </Box>
      <Box c="ml-[7px] w-[64px]">
        <Cell c="w-[23px] bg-[#545454]"><Ic n="prop" /></Cell>
        <Cell c="w-[40px] gap-[3px] text-[#606060]"><Ic n="falloff" /><Chev /></Cell>
      </Box>
      <EditorBtn n="vis" c="ml-[20px] w-[39px]" />
      <Box c="ml-[7px] w-[49px]">
        <Cell c="w-[23px] bg-[#4772b3] text-white"><Ic n="gizmo" /></Cell><Cell c="w-[24px]"><Chev /></Cell>
      </Box>
      <Box c="ml-[7px] w-[49px]">
        <Cell c="w-[23px] bg-[#4772b3] text-white"><Ic n="overlay" /></Cell><Cell c="w-[24px]"><Chev /></Cell>
      </Box>
      <Box c="ml-[7px] w-[24px] justify-center !bg-[#545454]"><Ic n="xray" c="text-[#ccc]" /></Box>
    </div>
    <div className="relative flex h-[30px] shrink-0 items-start justify-between">
      <div className="h-[30px] rounded-br-[6px] bg-[#363636]/95 pt-[3px] pr-[11px] pl-[11px]">
        <div className="flex h-[23px] w-[119px] gap-px overflow-hidden rounded-[4px]">
          {selModes.map((s, i) => (
            <div key={i} className={`flex flex-1 items-center justify-center ${i === 0 ? "bg-[#4772b3]" : "bg-[#545454]"}`}>
              <svg viewBox="0 0 20 20" className="h-[18px] w-[18px]">{s}</svg>
            </div>
          ))}
        </div>
      </div>
      <div className="h-[30px] rounded-bl-[6px] bg-[#363636]/95 pt-[2px] pr-[10px] pl-[11px]">
        <Box c="w-[81px] justify-between pr-[2px] pl-[9px]"><T>Options</T><Chev /></Box>
      </div>
    </div>
    <div className="relative flex min-h-0 flex-1">
      <div className="flex w-[70px] shrink-0 flex-col overflow-hidden pt-[10px] pl-[11px]">
        <ToolBtn n="select" tri c="rounded-t-[4px] !bg-[#4772b3]" />
        <ToolBtn n="cursor" c="mt-px rounded-b-[4px]" />
        <ToolBtn n="move" c="mt-[7px] rounded-t-[4px]" />
        <ToolBtn n="rotate" c="mt-px" />
        <ToolBtn n="scale" tri c="mt-px" />
        <ToolBtn n="transform" c="mt-px rounded-b-[4px]" />
        <ToolBtn n="annotate" tri c="mt-[6px] rounded-t-[4px]" />
        <ToolBtn n="measure" c="mt-px" />
      </div>
      <div className="pt-[9px] pl-[11px] text-[14px] font-medium text-white [text-shadow:0_0_2px_#000,0_1px_2px_#000]">
        <div className="h-[22px] leading-[22px]">User Perspective</div>
        <div className="h-[22px] leading-[22px]">(1) Scene Collection | Plane.002</div>
      </div>
    </div>
    <div className="absolute top-[66px] left-[3px] h-[355px] w-[4px] rounded-full bg-[#4c4c4c]" />
    <div className="absolute top-[91px] right-0 flex h-[23px] w-[11px] items-center justify-center rounded-l bg-[#303030]"><Right c="rotate-180 text-[#bbb]" /></div>
    <div className="pointer-events-none absolute inset-0 rounded-[7px] border border-[#484848]" />
  </div>
);

/* ---------- node editor ---------- */
const GRN = "#00d6a3", INT = "#598c5c", FLT = "#a1a1a1", BOOL = "#cca6d6", VEC = "#6363c7";
type Sock = { side: "l" | "r"; col: string; shape?: "o" | "d" | "dd" | "e" };
type Row = { k: "t" | "drop" | "check" | "field" | "vec"; label?: string; val?: string; h: number; mt?: number; s?: Sock };
type NodeT = { title: string; x: number; y: number; w: number; hh: number; h: number; pt: number; head: string; rows: Row[] };
const o = (label: string, col: string, h: number, shape: Sock["shape"] = "o"): Row => ({ k: "t", label, h, s: { side: "r", col, shape } });
const inp = (label: string, col: string, h: number, shape: Sock["shape"] = "o", mt = 0): Row => ({ k: "t", label, h, mt, s: { side: "l", col, shape } });

const nodes: NodeT[] = [
  { title: "Group Input", x: 409, y: 582, w: 84.7, hh: 12.5, h: 124, pt: 2.3, head: "bg-[#1b1b1b]", rows: [
    o("Geometry", GRN, 13.4), o("Sides", INT, 13.4), o("Pyramid width", FLT, 13.6), o("Pyramid height", FLT, 13.6),
    o("Door height", FLT, 13.2, "d"), o("Door width", FLT, 13.2, "d"), o("Doorsteps", INT, 13.2, "d"), o("", "#666", 13.4, "e")] },
  { title: "Multiply", x: 563, y: 687.5, w: 85, hh: 12.5, h: 89.5, pt: 2, head: "bg-[#246283]", rows: [
    o("Value", FLT, 13.3), { k: "drop", val: "Multiply", h: 13.3, mt: 3.7 }, { k: "check", label: "Clamp", h: 13.3, mt: 1.8 },
    inp("Value", FLT, 13.3), { k: "field", label: "Value", val: "8.000", h: 13.3, s: { side: "l", col: FLT } }] },
  { title: "Cone", x: 773, y: 540, w: 84.7, hh: 12, h: 181, pt: 1.7, head: "bg-[#1d725e]", rows: [
    o("Mesh", GRN, 13.65), o("Top", BOOL, 13.65, "d"), o("Bottom", BOOL, 13.65, "d"), o("Side", BOOL, 13.65, "d"), o("UV Map", VEC, 13.65, "d"),
    { k: "drop", label: "Fill Ty...", val: "N-Gon", h: 13.3, mt: 3.2 },
    inp("Vertices", INT, 13.3), inp("Side Segments", INT, 13.3),
    { k: "field", label: "Fill Segments", val: "1", h: 13.3, s: { side: "l", col: INT } },
    { k: "field", label: "Radius Top", val: "0 m", h: 13.3, s: { side: "l", col: FLT } },
    inp("Radius Bottom", FLT, 13.3), inp("Depth", FLT, 13.3)] },
  { title: "Set Position", x: 1028.5, y: 676, w: 85.5, hh: 12, h: 106, pt: 1.7, head: "bg-[#1d725e]", rows: [
    { k: "t", label: "Geometry", h: 13.2, s: { side: "l", col: GRN } }, inp("Selection", BOOL, 13.2, "dd"), inp("Position", VEC, 13.2, "d"), inp("Offset", VEC, 13.2, "dd"),
    { k: "vec", h: 36, mt: 1.2 }] },
  { title: "Group Output", x: 1157, y: 676, w: 85.5, hh: 12, h: 42.5, pt: 1.7, head: "bg-[#1b1b1b]", rows: [inp("Geometry", GRN, 13.3), inp("", "#777", 13.3, "e")] },
  { title: "Separate XYZ", x: 677.7, y: 757.7, w: 85.3, hh: 12, h: 71, pt: 2.4, head: "bg-[#246283]", rows: [
    o("X", FLT, 13, "d"), o("Y", FLT, 13, "d"), o("Z", FLT, 13, "d"), inp("Vector", VEC, 13, "d", 2)] },
  { title: "Position", x: 565, y: 808.5, w: 85.3, hh: 12, h: 29.5, pt: 2.4, head: "bg-[#83314a]", rows: [o("Position", VEC, 13, "d")] },
  { title: "Round", x: 790.5, y: 806.7, w: 85.3, hh: 12, h: 76.5, pt: 2.3, head: "bg-[#246283]", rows: [
    o("Value", FLT, 13, "d"), { k: "drop", val: "Round", h: 13.3, mt: 3.4 }, { k: "check", label: "Clamp", h: 13.3, mt: 2.3 }, inp("Value", FLT, 13.3, "d")] },
  { title: "Combine XYZ", x: 900, y: 738.7, w: 85, hh: 12.3, h: 71, pt: 2.2, head: "bg-[#246283]", rows: [
    o("Vector", VEC, 13, "d"), inp("X", FLT, 13.3, "d", 2), inp("Y", FLT, 13.3, "d"), inp("Z", FLT, 13.3, "d")] },
];

const Socket = ({ s }: { s: Sock }) => (
  <svg viewBox="-4 -4 8 8" className={`absolute top-1/2 h-[8px] w-[8px] -translate-y-1/2 ${s.side === "l" ? "-left-[4.500px]" : "-right-[4.200px]"}`}>
    {s.shape === "d" || s.shape === "dd" ? (
      <>
        <path d="M0-3.300L3 0 0 3.300-3 0z" fill={s.col} stroke="#111" strokeWidth=".4" />
        {s.shape === "dd" && <circle r="1" fill="#222" />}
      </>
    ) : s.shape === "e" ? (
      <circle r="2.800" fill="#252525" stroke={s.col} strokeWidth=".8" />
    ) : (
      <circle r="2.900" fill={s.col} stroke="#111" strokeWidth=".4" />
    )}
  </svg>
);

const NodeRow = ({ r }: { r: Row }) => (
  <div className="relative flex shrink-0 items-center px-[6px]" style={{ height: r.h, marginTop: r.mt }}>
    {r.k === "t" && <div className={`w-full ${r.s?.side === "r" ? "pr-[1px] text-right" : ""}`}>{r.label}</div>}
    {r.k === "drop" && (
      <>
        {r.label && <div className="w-[32px] shrink-0">{r.label}</div>}
        <div className="flex h-[12px] flex-1 items-center justify-between rounded-[2px] border border-[#454545] bg-[#282828] pr-px pl-[4px]">{r.val}<Chev c="!h-[6px] !w-[6px]" /></div>
      </>
    )}
    {r.k === "check" && <><div className="mr-[2px] h-[9px] w-[9px] rounded-[1px] bg-[#545454]" />{r.label}</>}
    {r.k === "field" && <div className="flex h-[12px] flex-1 items-center justify-between rounded-[2px] bg-[#545454] px-[9px]"><span>{r.label}</span><span>{r.val}</span></div>}
    {r.k === "vec" && (
      <div className="flex h-full flex-1 flex-col gap-px overflow-hidden rounded-[2px]">
        {["X", "Y", "Z"].map((a) => <div key={a} className="flex flex-1 items-center justify-between bg-[#545454] px-[9px]"><span>{a}</span><span>0 m</span></div>)}
      </div>
    )}
    {r.s && <Socket s={r.s} />}
  </div>
);

// Node and link coordinates share the window's space; the canvas starts at y = 493.
const NodeBox = ({ n }: { n: NodeT }) => (
  <div className="absolute flex flex-col rounded-[2px] bg-[#303030] shadow-[0_1px_4px_1px_rgba(0,0,0,0.6)]" style={{ left: n.x, top: n.y - 493, width: n.w, height: n.h }}>
    <div className={`flex shrink-0 items-center rounded-t-[2px] pl-[5px] ${n.head}`} style={{ height: n.hh }}>
      <Down c="mr-[3px] mb-px !h-[5px] !w-[7px]" />{n.title}
    </div>
    <div className="flex flex-col" style={{ paddingTop: n.pt }}>{n.rows.map((r, i) => <NodeRow key={i} r={r} />)}</div>
    {n.title === "Set Position" && (
      <svg viewBox="-4 -4 8 8" className="absolute top-[16.300px] -right-[4.200px] h-[8px] w-[8px]"><circle r="2.900" fill={GRN} stroke="#111" strokeWidth=".4" /></svg>
    )}
  </div>
);

const link = (x1: number, y1: number, x2: number, y2: number) => {
  const d = (x2 - x1) * 0.42;
  return `M${x1} ${y1}C${x1 + d} ${y1} ${x2 - d} ${y2} ${x2} ${y2}`;
};

const NodeEditor = () => (
  <div className="relative flex h-[425px] shrink-0 flex-col overflow-hidden rounded-[7px] border border-[#303030] bg-[#1d1d1d]">
    <svg viewBox="1 494 1582 423" className="absolute inset-0 h-full w-full">
      <defs>
        <pattern id="dots" x="-6.700" y="493.600" width="61.300" height="61.300" patternUnits="userSpaceOnUse"><circle cx="30.650" cy="30.650" r="1" fill="#2e2e2e" /></pattern>
        <linearGradient id="fi" x1="648" x2="772" y1="0" y2="0" gradientUnits="userSpaceOnUse"><stop offset=".2" stopColor={FLT} /><stop offset=".8" stopColor={INT} /></linearGradient>
      </defs>
      <rect x="0" y="493" width="1584" height="425" fill="url(#dots)" />
      <g fill="none" strokeWidth="1.600" stroke={FLT}>
        <path d={link(494, 616.7, 772, 645.3)} stroke={INT} />
        <path d={link(494, 630.5, 772, 698.3)} />
        <path d={link(494, 644.3, 772, 711.7)} />
        <path d={link(494, 644.3, 563, 754.3)} />
        <path d={link(648, 708.7, 772, 658.7)} stroke="url(#fi)" />
        <path d={link(858, 560.7, 1028, 696.3)} stroke={GRN} strokeWidth="2" />
        <path d="M1114 696.300H1157" stroke={GRN} strokeWidth="2" />
        <g strokeWidth="1">
          <path d={link(650, 829.3, 677, 819.7)} stroke="#5353a5" />
          <path d={link(985, 759.7, 1028, 722.7)} stroke="#5353a5" />
          <path d={link(763, 778.7, 899, 774.7)} stroke="#8a8a8a" strokeDasharray="4 1" />
          <path d={link(763, 791.7, 899, 788)} stroke="#8a8a8a" strokeDasharray="4 1" />
          <path d={link(763, 804.7, 790.5, 872.7)} stroke="#8a8a8a" strokeDasharray="4 1" />
          <path d={link(876, 827.5, 899.5, 801.3)} stroke="#8a8a8a" strokeDasharray="4 1" />
        </g>
      </g>
    </svg>
    <div className="absolute -inset-px text-[7px] leading-none whitespace-nowrap">{nodes.map((n) => <NodeBox key={n.title} n={n} />)}</div>
    <div className="relative flex h-[31px] shrink-0 items-center pb-[3px] pl-[9px]">
      <EditorBtn n="dots" c="w-[40px]" />
      <Box c="ml-[6px] w-[96px] justify-between pr-[2px] pl-[8px]"><T>Modifier</T><Chev /></Box>
      <T c="ml-[15px] w-[50px]">View</T><T c="w-[61px]">Select</T><T c="w-[44px]">Add</T><T c="w-[306px]">Node</T>
      <Box c="w-[270px] !bg-[#161616]">
        <Cell c="w-[39px] gap-[3px] border-r border-[#424242] bg-[#282828]"><Ic n="tree" /><Chev /></Cell>
        <Cell c="w-[155px] !justify-start pl-[9px]"><T>Chapter 9 - Exercise</T></Cell>
        <Cell c="w-[25px] border-r border-[#424242] bg-[#545454]"><Ic n="shield" c="text-[#9a9a9a]" /></Cell>
        <Cell c="w-[25px] border-r border-[#424242] bg-[#545454]"><Ic n="copy" /></Cell>
        <Cell c="w-[24px] bg-[#545454]"><Ic n="x" c="text-white" /></Cell>
      </Box>
      <Ic n="pin" c="ml-[9px] text-[#999]" />
      <Box c="mr-[6px] ml-auto w-[25px] justify-center !bg-[#545454]"><Ic n="magnet" c="text-[#999]" /></Box>
      <Box c="mr-[8px] w-[50px]">
        <Cell c="w-[24px] bg-[#4772b3] text-white"><Ic n="overlay" /></Cell><Cell c="w-[24px]"><Chev /></Cell>
      </Box>
    </div>
    <div className="relative mt-[14px] flex h-[24px] shrink-0 items-center pl-[22px]">
      <Ic n="obj" /><T c="ml-[12px] w-[87px]">Plane.002</T><Right /><Ic n="dots" c="ml-[11px]" />
      <T c="ml-[12px] w-[123px]">GeometryNodes</T><Right /><Ic n="tree" c="ml-[12px]" /><T c="ml-[12px]">Chapter 9 - Exercise</T>
    </div>
    <div className="absolute top-[32px] right-[2px] h-[376px] w-[4px] rounded-full bg-[#353535]" />
    <div className="absolute bottom-[3px] left-[10px] h-[4px] w-[1562px] rounded-full bg-[#353535]" />
    <div className="absolute top-[57px] -left-px flex h-[23px] w-[11px] items-center justify-center rounded-r bg-[#161616]"><Right c="text-[#bbb]" /></div>
    <div className="absolute top-[57px] right-0 flex h-[23px] w-[12px] items-center justify-center rounded-l bg-[#161616]"><Right c="rotate-180 text-[#bbb]" /></div>
  </div>
);

/* ---------- timeline ---------- */
const frames = Array.from({ length: 25 }, (_, i) => (i + 1) * 10);
const Timeline = () => (
  <div className="relative flex h-[72px] shrink-0 flex-col overflow-hidden rounded-t-[7px] border-t border-[#3a3a3a] bg-[#1d1d1d]">
    <div className="flex h-[31px] shrink-0 items-center bg-[#303030] pb-px pl-[11px]">
      <EditorBtn n="clock" c="w-[39px]" />
      <Box c="ml-[7px] w-[168px]">
        <Cell c="w-[91px] !justify-between border-r border-[#424242] pr-[3px] pl-[8px]"><T>Playback</T><Chev /></Cell>
        <Cell c="w-[75px] !justify-between pr-[2px] pl-[8px]"><T>Keying</T><Chev /></Cell>
      </Box>
      <T c="ml-[12px] w-[50px]">View</T><T c="w-[389px]">Marker</T>
      <Box c="w-[49px] !bg-[#2b2b2b]"><Cell c="w-[24px] bg-[#545454] text-[#a5a5a5]"><Ic n="rec" /></Cell><Cell c="w-[23px] text-[#606060]"><Chev /></Cell></Box>
      <div className="ml-[8px] flex h-[24px] w-[149px] gap-px overflow-hidden rounded-[4px]">
        {["first", "prevk", "rev", "play", "nextk", "last"].map((n) => <div key={n} className="flex flex-1 items-center justify-center bg-[#545454]"><Ic n={n} c="text-[#eee]" /></div>)}
      </div>
      <div className="mr-[7px] ml-auto flex h-[24px] w-[92px] items-center justify-center rounded-[4px] bg-[#545454] pr-[2px]">1</div>
      <div className="mr-[9px] flex h-[24px] w-[242px] gap-px overflow-hidden rounded-[4px]">
        <Cell c="w-[23px] bg-[#545454]"><Ic n="stop" /></Cell>
        <Cell c="w-[111px] !justify-between bg-[#545454] pr-[18px] pl-[19px]"><T>Start</T><T>1</T></Cell>
        <Cell c="w-[106px] !justify-between bg-[#545454] pr-[17px] pl-[19px]"><T>End</T><T>250</T></Cell>
      </div>
    </div>
    <div className="flex h-[29px] shrink-0 items-center text-[#a8a8a8]">
      <div className="flex w-[82px] shrink-0 justify-center pl-[35px]"><div className="flex h-[21px] w-[29px] shrink-0 items-center justify-center rounded-[4px] border border-[#5680c1] bg-[#4772b3] text-white">1</div></div>
      {frames.map((f) => <div key={f} className="w-[58.920px] shrink-0 text-center">{f}</div>)}
    </div>
    <svg viewBox="0 982 1584 11" preserveAspectRatio="none" className="h-[11px] w-[1584px] shrink-0">
      <rect x="0" y="982" width="1584" height="11" fill="#232323" />
      <rect x="59" y="982" width="1467" height="11" fill="#2c2c2c" />
      <rect x="12" y="985" width="1560" height="5" rx="2.500" fill="#3c3c3c" />
      {frames.map((f, i) => <path key={f} d={`M${Math.round(111 + i * 58.92) + 0.5} 982v11`} stroke="#151515" />)}
      {frames.map((f, i) => <path key={f} d={`M${Math.round(82 + i * 58.92) + 0.5} 982v11`} stroke="#232323" />)}
      <circle cx="14" cy="987.500" r="1.500" fill="#1d1d1d" />
      <path d="M4 986l4 5M1577 992l5-6" stroke="#777" fill="none" />
    </svg>
    <div className="absolute top-[56px] left-[58px] h-[16px] w-[2px] bg-[#4772b3]" />
  </div>
);

/* ---------- outliner and properties ---------- */
const Outliner = () => (
  <div className="flex h-[264px] shrink-0 flex-col overflow-hidden rounded-l-[7px] border border-r-0 border-[#3a3a3a] bg-[#282828]">
    <div className="flex h-[33px] shrink-0 items-center pb-[3px] pl-[8px]">
      <EditorBtn n="outl" c="w-[40px]" /><EditorBtn n="layer" c="ml-[6px] w-[40px]" />
      <Box c="ml-[19px] w-[148px] !bg-[#1d1d1d] pl-[5px]"><Ic n="search" /><T c="ml-[8px] text-[#6b6b6b]">Search</T></Box>
      <EditorBtn n="filter" c="ml-[18px] w-[40px]" />
    </div>
    <div className="flex h-[24px] shrink-0 items-center pl-[24px]">
      <div className="flex h-[22px] w-[25px] items-center justify-center rounded-[5px] border border-[#666] bg-[#505050]"><Ic n="coll" c="text-[#eee]" /></div>
      <T c="ml-[5px] text-white">Scene Collection</T>
    </div>
    <div className="flex h-[25px] shrink-0 items-center bg-[#2b2b2b] pl-[32px]">
      <Right c="text-[#bbb]" />
      <div className="ml-[8px] flex h-[22px] w-[25px] items-center justify-center rounded-[5px] border border-[#5c5c5c] bg-[#4a4a4a] text-[#cf8a51]"><Ic n="tri" /></div>
      <T c="ml-[5px] w-[96px] text-[#c4c4c4]">Plane.002</T>
      <Ic n="wrench" c="text-[#5f83d6]" /><Ic n="mesh" c="ml-[7px] text-[#10b488]" />
      <Ic n="eye" c="ml-[54px] !h-[17px] !w-[17px]" /><Ic n="cam" c="ml-[7px]" />
    </div>
    {[0, 1, 2, 3, 4, 5, 6, 7].map((i) => <div key={i} className={`h-[25px] shrink-0 ${i % 2 ? "bg-[#2b2b2b]" : ""}`} />)}
  </div>
);

const propTabs: [string, string][] = [
  ["tool", "text-[#a5a5a5] mt-[10px]"], ["render", "text-[#a5a5a5] mt-[9px]"], ["output", "text-[#a5a5a5]"], ["layer", "text-[#a5a5a5]"],
  ["scene", "text-[#a5a5a5]"], ["world", "text-[#b85560]"], ["obj", "text-[#c27d48] mt-[9px]"], ["wrenchF", "text-[#6a96f5] bg-[#303030]"],
  ["part", "text-[#5a80d0]"], ["phys", "text-[#5a80d0]"], ["constr", "text-[#5a80d0]"], ["mesh", "text-[#14b389]"], ["mat", "text-[#b85560]"],
];
const fields: [string, string, boolean][] = [
  ["Sides", "4", true], ["Pyramid wi...", "5.33 m", true], ["Pyramid he...", "5.2 m", true],
  ["Door height", "2 m", false], ["Door width", "1 m", false], ["Doorsteps", "1", false],
];
const Properties = () => (
  <div className="mt-[3px] flex h-[664px] shrink-0 flex-col overflow-hidden rounded-l-[7px] border border-r-0 border-[#3a3a3a] bg-[#303030]">
    <div className="flex h-[31px] shrink-0 items-center pb-[3px] pl-[10px]">
      <EditorBtn n="props" c="w-[40px]" />
      <Box c="ml-[36px] w-[148px] !bg-[#1d1d1d] pl-[5px]"><Ic n="search" /><T c="ml-[7px] text-[#6b6b6b]">Search</T></Box>
      <Box c="ml-[61px] w-[25px] justify-center"><Chev /></Box>
    </div>
    <div className="flex min-h-0 flex-1">
      <div className="flex w-[34px] shrink-0 flex-col bg-[#1d1d1d]">
        {propTabs.map(([n, c]) => (
          <div key={n} className={`flex h-[35px] shrink-0 items-center justify-center rounded-l-[4px] ${c}`}><Ic n={n} /></div>
        ))}
      </div>
      <div className="flex flex-1 flex-col pl-[10px]">
        <div className="mt-[10px] flex h-[24px] items-center pl-[3px]">
          <Ic n="obj" /><T c="ml-[12px] w-[64px]">Plane....</T><Right /><Ic n="dots" c="ml-[11px]" /><T c="ml-[12px] w-[108px]">Geometry...</T><Ic n="pin" c="text-[#888]" />
        </div>
        <div className="mt-[21px] flex h-[24px] w-[274px] items-center rounded-[4px] bg-[#545454] pl-[9px]">
          <svg viewBox="0 0 12 12" className="h-[12px] w-[12px]"><path d="M6 0v12M0 6h12" stroke="#ddd" strokeWidth="1.200" /></svg>
          <T c="ml-[86px]">Add Modifier</T>
        </div>
        <div className="mt-[12px] flex h-[289px] w-[275px] flex-col rounded-[4px] border border-[#4772b3] bg-[#3d3d3d]">
          <div className="mt-[4px] flex h-[24px] items-center pl-[8px]">
            <Down /><Ic n="dots" c="ml-[6px]" />
            <div className="ml-[14px] flex h-[23px] w-[153px] overflow-hidden rounded-[4px]">
              <Cell c="w-[42px] bg-[#1d1d1d]">G...</Cell>
              <Cell c="w-[22px] bg-[#545454]"><Ic n="mesh" /></Cell>
              <Cell c="w-[23px] border-l border-[#3d3d3d] bg-[#4772b3] text-white"><Ic n="edit" /></Cell>
              <Cell c="w-[22px] border-l border-[#3d3d3d] bg-[#4772b3] text-white"><Ic n="disp" /></Cell>
              <Cell c="w-[22px] border-l border-[#3d3d3d] bg-[#4772b3] text-white"><Ic n="camB" /></Cell>
              <Cell c="w-[21px] bg-[#282828]"><Down /></Cell>
            </div>
            <Ic n="x" c="ml-[4px] !h-[17px] !w-[17px] text-white" />
            <svg viewBox="0 0 16 8" className="ml-[13px] h-[8px] w-[16px]"><path d="M1 2h15M1 6h15" stroke="#888" strokeWidth="1.200" strokeDasharray="1.500 2.500" /></svg>
          </div>
          <div className="mt-[13px] ml-[9px] flex h-[24px] w-[254px] overflow-hidden rounded-[4px]">
            <Cell c="w-[39px] gap-[3px] border-r border-[#3d3d3d] bg-[#282828]"><Ic n="tree" /><Chev /></Cell>
            <Cell c="w-[139px] !justify-start bg-[#1d1d1d] pl-[9px]"><T>Chapter 9 - Exer...</T></Cell>
            <Cell c="w-[25px] border-l border-[#3d3d3d] bg-[#545454]"><Ic n="shield" c="text-[#9a9a9a]" /></Cell>
            <Cell c="w-[25px] border-l border-[#3d3d3d] bg-[#545454]"><Ic n="copy" /></Cell>
            <Cell c="w-[26px] border-l border-[#3d3d3d] bg-[#545454]"><Ic n="x" c="text-white" /></Cell>
          </div>
          <div className="mt-[7px] flex flex-col gap-[7px]">
            {fields.map(([l, v, on]) => (
              <div key={l} className={`flex h-[24px] items-center ${on ? "" : "text-[#8a8a8a]"}`}>
                <T c="w-[96px] text-right">{l}</T>
                <div className={`ml-[12px] flex h-[24px] w-[106px] items-center justify-center pr-[2px] ${on ? "rounded-[4px] bg-[#545454]" : "rounded-l-[4px] bg-[#484848]"}`}>{v}</div>
                {on ? <div className="w-[25px]" /> : <div className="ml-px flex h-[24px] w-[24px] items-center justify-center rounded-r-[4px] bg-[#484848] text-[#666]"><Ic n="sheet" /></div>}
                <div className={`ml-[10px] h-[5px] w-[5px] rounded-full ${on ? "bg-[#e6e6e6]" : "bg-[#5f5f5f]"}`} />
              </div>
            ))}
          </div>
          <div className="mt-[7px] flex h-[24px] items-center pl-[17px]"><Right /><T c="ml-[8px]">Manage</T></div>
        </div>
      </div>
    </div>
  </div>
);

export default function App() {
  return (
    <div className="flex h-[1013px] w-[1915px] flex-col overflow-hidden bg-[#181818] font-[Inter,sans-serif] text-[14px] leading-[18px] text-[#e0e0e0] tabular-nums">
      <TitleBar />
      <MenuBar />
      <div className="flex h-[931px] shrink-0">
        <div className="flex w-[1584px] shrink-0 flex-col">
          <div className="flex h-[427px] shrink-0 gap-[4px]">
            <Spreadsheet />
            <Viewport />
          </div>
          <div className="h-[4px] shrink-0" />
          <NodeEditor />
          <div className="h-[3px] shrink-0" />
          <Timeline />
        </div>
        <div className="ml-[5px] flex w-[326px] flex-col">
          <Outliner />
          <Properties />
        </div>
      </div>
      <div className="flex h-[20px] items-center justify-end pr-[11px] text-[#8c8c8c]">
        <Ic n="globe" c="translate-y-px" /><div className="mx-[9px] h-[18px] w-px translate-y-[2px] bg-[#999]" /><T c="translate-y-[2px]">4.5.2</T>
      </div>
    </div>
  );
}
